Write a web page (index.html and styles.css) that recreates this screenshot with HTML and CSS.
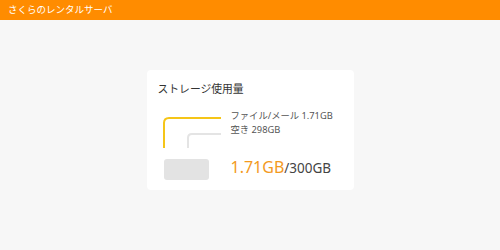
FILE: index.html
```html
<!DOCTYPE html>
<html lang="ja">
<head>
<meta charset="utf-8">
<link rel="stylesheet" href="styles.css">
</head>
<body>
<header class="topbar">さくらのレンタルサーバ</header>
<main class="main">
  <section class="card">
    <h2 class="card-title">ストレージ使用量</h2>
    <div class="usage">
      <svg class="chart" width="64" height="78" viewBox="0 0 64 78">
        <path d="M3 43 V18 Q3 13 8 13 H60" fill="none" stroke="#f5c518" stroke-width="2"/>
        <path d="M27 43 V33 Q27 29 31 29 H60" fill="none" stroke="#e4e4e4" stroke-width="2"/>
        <rect x="3" y="54" width="45" height="21" rx="3" fill="#e3e3e3"/>
      </svg>
      <div class="info">
        <div class="legend">
          <div>ファイル/メール 1.71GB</div>
          <div>空き 298GB</div>
        </div>
        <div class="total"><span class="used">1.71GB</span><span class="cap">/300GB</span></div>
      </div>
    </div>
  </section>
</main>
</body>
</html>
```
FILE: styles.css
```css
html, body {
  margin: 0;
  padding: 0;
}
body {
  width: 500px;
  height: 250px;
  background: #f7f7f7;
  font-family: "Noto Sans", "Noto Sans CJK JP", sans-serif;
  color: #333;
  display: flex;
  flex-direction: column;
}
.topbar {
  height: 20px;
  background: #ff8c00;
  color: #fff;
  font-size: 9.5px;
  line-height: 20px;
  padding-left: 8px;
  box-sizing: border-box;
}
.main {
  flex: 1;
  display: flex;
  justify-content: center;
  padding-top: 50px;
  box-sizing: border-box;
}
.card {
  width: 207px;
  height: 120px;
  background: #fff;
  border-radius: 4px;
  box-sizing: border-box;
  padding: 11px 11px 0 11px;
}
.card-title {
  margin: 0;
  font-size: 10.8px;
  font-weight: 400;
  line-height: 16px;
  color: #333;
}
.usage {
  display: flex;
  margin-top: 8px;
}
.chart {
  margin-left: 3px;
  flex: none;
}
.info {
  margin-left: 6px;
  display: flex;
  flex-direction: column;
}
.legend {
  font-size: 9.3px;
  line-height: 14px;
  color: #555;
  margin-top: 4px;
}
.total {
  margin-top: 20px;
  line-height: 20px;
  white-space: nowrap;
}
.used {
  color: #f39a1e;
  font-size: 16px;
}
.cap {
  color: #444;
  font-size: 13.5px;
}
```
